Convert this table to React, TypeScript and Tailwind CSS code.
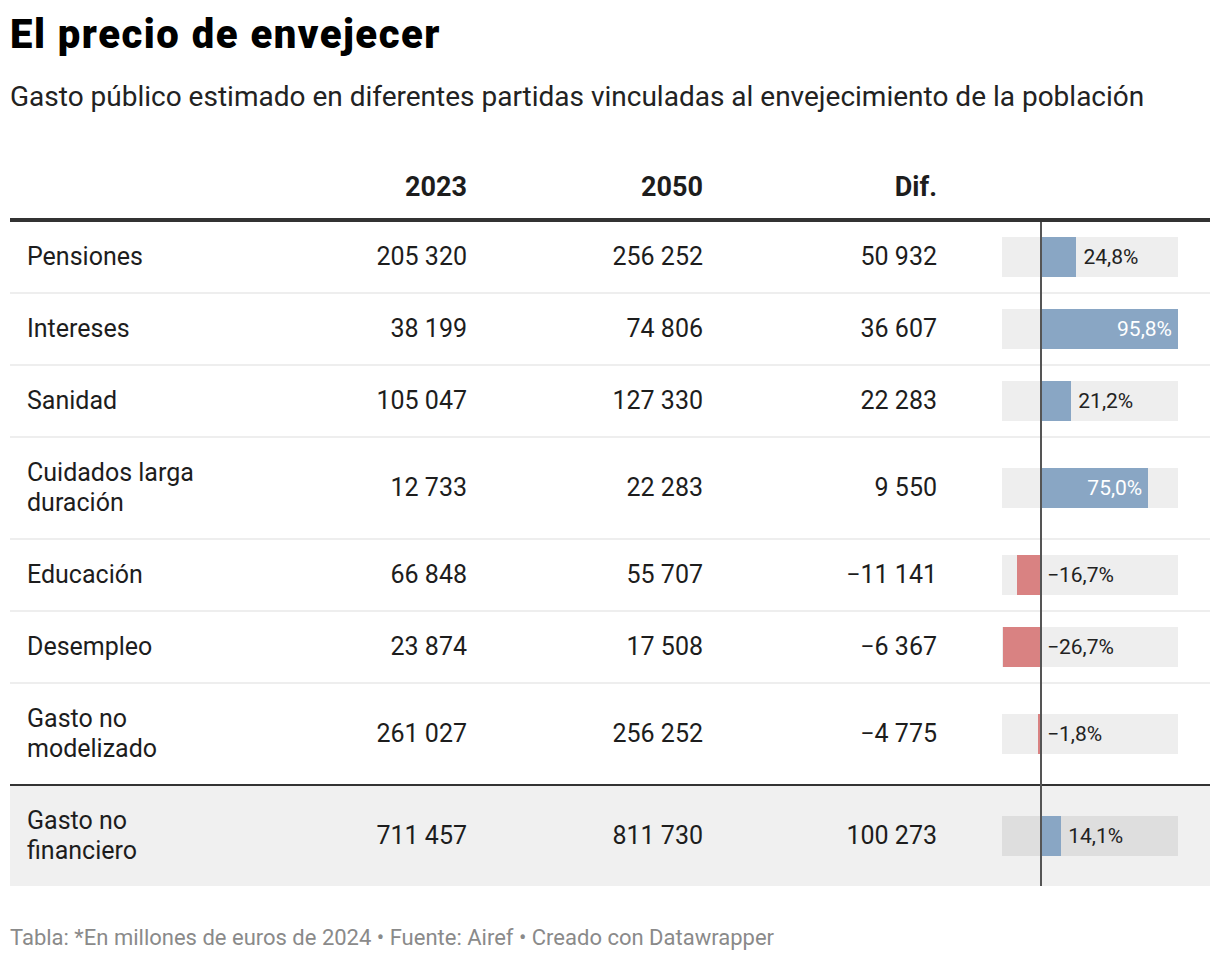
import React from 'react'

type Row = {
  label: string
  y2023: string
  y2050: string
  dif: string
  pct: number
  pctLabel: string
  inside?: boolean
  tall?: boolean
}

const ROWS: Row[] = [
  { label: 'Pensiones', y2023: '205 320', y2050: '256 252', dif: '50 932', pct: 24.8, pctLabel: '24,8%' },
  { label: 'Intereses', y2023: '38 199', y2050: '74 806', dif: '36 607', pct: 95.8, pctLabel: '95,8%', inside: true },
  { label: 'Sanidad', y2023: '105 047', y2050: '127 330', dif: '22 283', pct: 21.2, pctLabel: '21,2%' },
  { label: 'Cuidados larga duración', y2023: '12 733', y2050: '22 283', dif: '9 550', pct: 75.0, pctLabel: '75,0%', inside: true, tall: true },
  { label: 'Educación', y2023: '66 848', y2050: '55 707', dif: '−11 141', pct: -16.7, pctLabel: '−16,7%' },
  { label: 'Desempleo', y2023: '23 874', y2050: '17 508', dif: '−6 367', pct: -26.7, pctLabel: '−26,7%' },
  { label: 'Gasto no modelizado', y2023: '261 027', y2050: '256 252', dif: '−4 775', pct: -1.8, pctLabel: '−1,8%', tall: true },
]

const TOTAL: Row = {
  label: 'Gasto no financiero',
  y2023: '711 457',
  y2050: '811 730',
  dif: '100 273',
  pct: 14.1,
  pctLabel: '14,1%',
  tall: true,
}

// px per percentage point, zero sits 39px into the 176px track
const SCALE = 1.43
const ZERO = 39

function cn(...c: (string | false | undefined)[]) {
  return c.filter(Boolean).join(' ')
}

function Bar({ row, total }: { row: Row; total?: boolean }) {
  const w = Math.abs(row.pct) * SCALE
  const left = row.pct >= 0 ? ZERO : ZERO - w
  return (
    <div className={cn('relative h-10 w-[176px] ml-[65px]', total ? 'bg-[#dedede]' : 'bg-[#eeeeee]')}>
      <div
        className={cn('absolute top-0 h-full', row.pct >= 0 ? 'bg-[#89a6c4]' : 'bg-[#d98282]')}
        style={{ left, width: w }}
      />
      {row.inside ? (
        <span
          className="absolute top-0 h-full flex items-center justify-end whitespace-nowrap text-[21px] leading-[24px] text-white"
          style={{ left: 0, width: ZERO + w - 6 }}
        >
          {row.pctLabel}
        </span>
      ) : (
        <span
          className="absolute top-0 h-full flex items-center whitespace-nowrap text-[21px] leading-[24px] text-[#222]"
          style={{ left: row.pct >= 0 ? ZERO + w + 7 : ZERO + 6 }}
        >
          {row.pctLabel}
        </span>
      )}
    </div>
  )
}

function TableRow({ row, total }: { row: Row; total?: boolean }) {
  return (
    <div
      className={cn(
        'grid grid-cols-[225px_232px_236px_234px_273px] items-center text-[25px] leading-[30px] text-[#1d1d1d]',
        row.tall ? 'h-[100px]' : 'h-[70px]',
        total && 'bg-[#f0f0f0]'
      )}
    >
      <div className="pl-[17px] pr-2">{row.label}</div>
      <div className="text-right">{row.y2023}</div>
      <div className="text-right">{row.y2050}</div>
      <div className="text-right">{row.dif}</div>
      <div className="flex items-center">
        <Bar row={row} total={total} />
      </div>
    </div>
  )
}

export default function App() {
  return (
    <div className="min-h-screen bg-white font-[Roboto,sans-serif] px-[10px]">
      <h1 className="pt-[12px] text-[40px] leading-[46px] tracking-[1.5px] font-black text-black">
        El precio de envejecer
      </h1>
      <p className="mt-[22px] text-[28px] leading-[34px] text-[#222]">
        Gasto público estimado en diferentes partidas vinculadas al envejecimiento de la población
      </p>

      <div className="mt-[57px] w-[1200px]">
        <div className="grid grid-cols-[225px_232px_236px_234px_273px] text-[27px] leading-[32px] font-bold text-[#1d1d1d] pb-[15px] border-b-4 border-[#333]">
          <div />
          <div className="text-right">2023</div>
          <div className="text-right">2050</div>
          <div className="text-right">Dif.</div>
          <div />
        </div>

        <div className="relative">
          <div className="divide-y-2 divide-[#eeeeee]">
            {ROWS.map((r) => (
              <div key={r.label}>
                <TableRow row={r} />
              </div>
            ))}
          </div>
          <div className="border-t-2 border-[#333]">
            <TableRow row={TOTAL} total />
          </div>
          <div className="absolute top-0 bottom-0 left-[1030px] w-[2px] bg-[#555]" />
        </div>
      </div>

      <p className="mt-[39px] text-[22px] leading-[26px] text-[#8a8a8a]">
        Tabla: *En millones de euros de 2024 • Fuente: Airef • Creado con Datawrapper
      </p>
    </div>
  )
}
